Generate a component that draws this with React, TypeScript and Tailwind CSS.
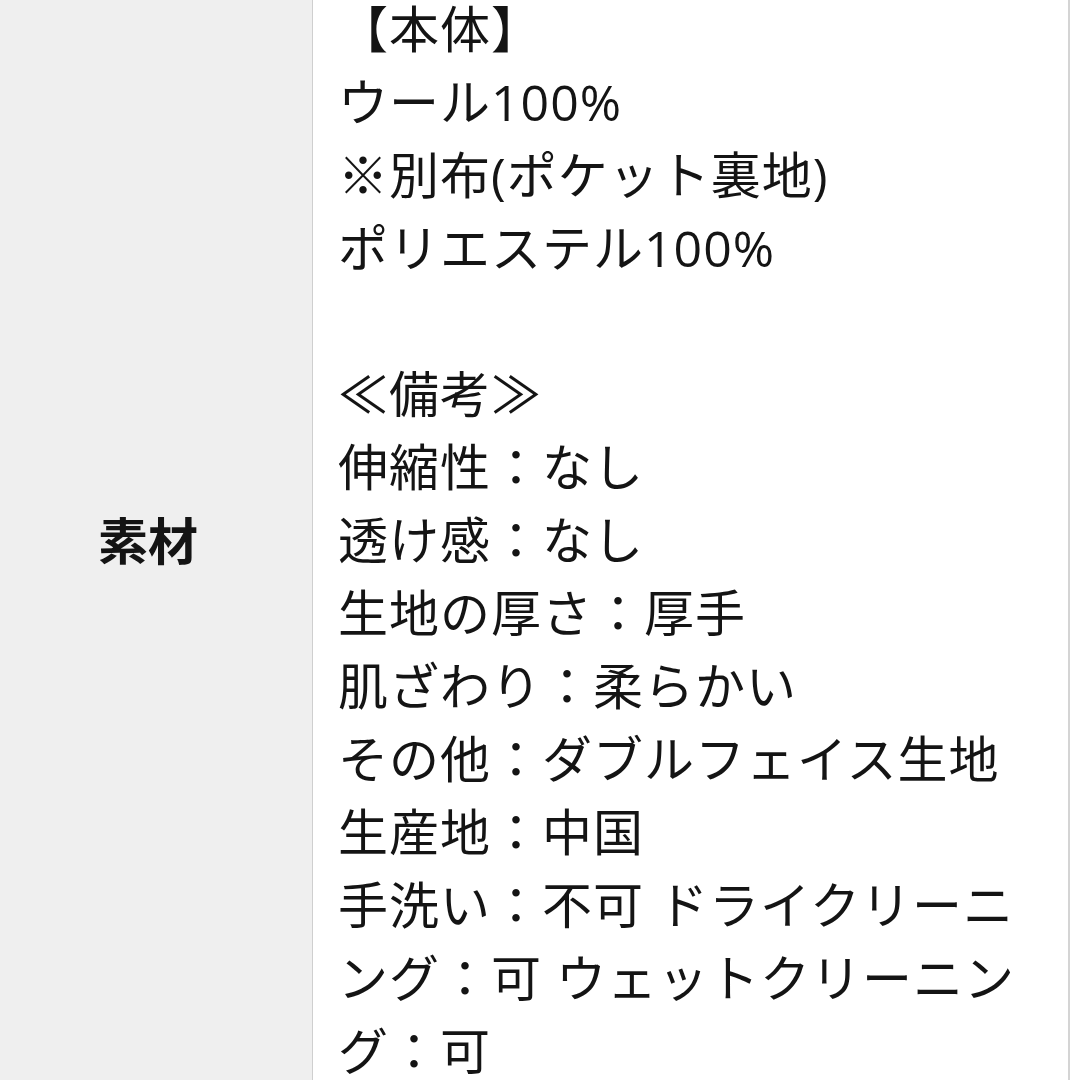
import React from 'react';

const lines = [
  '【本体】',
  'ウール100%',
  '※別布(ポケット裏地)',
  'ポリエステル100%',
  '',
  '≪備考≫',
  '伸縮性：なし',
  '透け感：なし',
  '生地の厚さ：厚手',
  '肌ざわり：柔らかい',
  'その他：ダブルフェイス生地',
  '生産地：中国',
  '手洗い：不可 ドライクリーニング：可 ウェットクリーニング：可',
];

export default function App() {
  return (
    <div
      className="w-[1080px] h-[1080px] overflow-hidden bg-white text-[#141414]"
      style={{ fontFamily: '"Open Sans", "Noto Sans CJK JP", sans-serif' }}
    >
      <div className="flex -mt-[7px] w-[1070px] border-r-2 border-[#d4d4d4]">
        {/* label cell */}
        <div className="w-[313px] shrink-0 bg-[#efefef] border-r border-[#cfcfcf] flex items-center justify-center pr-4">
          <span className="text-[50px] font-bold leading-none">素材</span>
        </div>
        {/* value cell */}
        <div className="flex-1 pl-[25px] pr-[25px] text-[50px] leading-[73px] tracking-[1px]">
          {lines.map((l, i) => (
            <div key={i} className="min-h-[73px]">
              {l}
            </div>
          ))}
        </div>
      </div>
    </div>
  );
}
